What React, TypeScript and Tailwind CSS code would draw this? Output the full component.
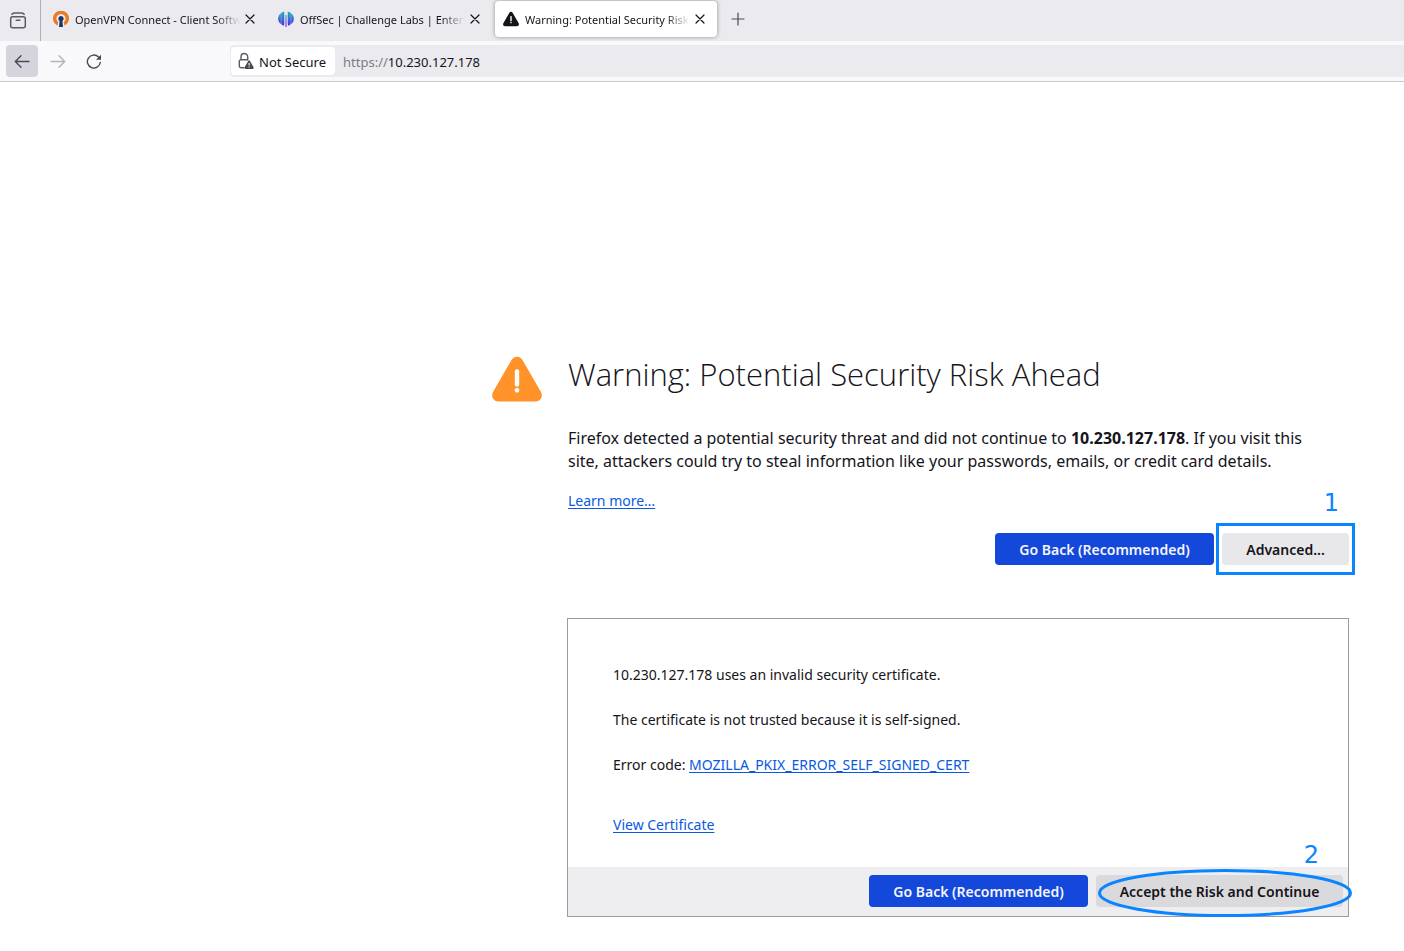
import type { ReactNode } from "react";

function CloseIcon() {
  return (
    <svg width="10" height="10" viewBox="0 0 10 10" fill="none" stroke="#15141a" strokeWidth="1.2" strokeLinecap="round" aria-hidden="true">
      <path d="M1 1l8 8M9 1l-8 8" />
    </svg>
  );
}

function RecentIcon() {
  return (
    <svg width="18" height="18" viewBox="0 0 18 18" fill="none" stroke="#5b5b66" strokeWidth="1.5" strokeLinecap="round" aria-hidden="true">
      <path d="M2.800 2.200C4 1 5 1 6 1H12C13 1 14 1 15.200 2.200" />
      <rect x="1.700" y="4.700" width="14.600" height="11" rx="2" />
      <path d="M7.200 8.300h3.600" />
    </svg>
  );
}

function OpenVpnIcon() {
  return (
    <svg width="16" height="16" viewBox="0 0 16 16" aria-hidden="true">
      <path d="M4.300 14.700A8 8 0 1 1 11.700 14.700L10.700 11.300A4.600 4.600 0 1 0 5.300 11.300Z" fill="#ea7b23" />
      <path d="M8 5a2.700 2.700 0 0 1 1.400 5L10 16H6l.6-6A2.700 2.700 0 0 1 8 5Z" fill="#1b3464" />
    </svg>
  );
}

function OffSecIcon() {
  return (
    <svg width="16" height="16" viewBox="0 0 16 16" aria-hidden="true">
      <defs>
        <linearGradient id="offsec" gradientUnits="userSpaceOnUse" x1="0" y1="0" x2="0" y2="16">
          <stop offset="0" stopColor="#20b2c4" />
          <stop offset="0.5" stopColor="#3a6fd0" />
          <stop offset="1" stopColor="#5a10e0" />
        </linearGradient>
      </defs>
      <g fill="url(#offsec)">
        <path d="M2.900 2.300V13C-.8 10.500-.8 5 2.900 2.300Z" />
        <path d="M3.200 1.800L6.300.6V12.500C6.300 14 5.800 14.800 5 14.500 4 14.200 3.200 13.200 3.200 12Z" />
        <path d="M7.500 4h1v12h-1Z" />
        <path d="M12.800 1.800L9.700.6V12.500C9.700 14 10.200 14.800 11 14.500 12 14.200 12.800 13.200 12.800 12Z" />
        <path d="M13.100 2.300V13C16.800 10.500 16.800 5 13.100 2.300Z" />
      </g>
    </svg>
  );
}

function WarningGlyph({ size, color, mark }: { size: number; color: string; mark: string }) {
  return (
    <svg width={size} height={size} viewBox="0 0 50 50" className="shrink-0" aria-hidden="true">
      <path
        d="M19.500 6C22 1.500 28 1.500 30.500 6L49 38C51.300 42.500 48.500 47.500 43.500 47.500H6.500C1.500 47.500-1.300 42.500 1 38Z"
        fill={color}
      />
      <path d="M25 17.500v13" stroke={mark} strokeWidth="4.400" strokeLinecap="round" />
      <rect x="22.800" y="34" width="4.400" height="4.400" rx="1.600" fill={mark} />
    </svg>
  );
}

function LockWarningIcon() {
  return (
    <svg width="16" height="18" viewBox="0 0 16 18" fill="none" aria-hidden="true">
      <path
        d="M6 15.800H3A1.700 1.700 0 0 1 1.300 14.100V9.400A1.700 1.700 0 0 1 3 7.700H9.500M3 7.700V4.800a3.300 3.300 0 0 1 6.700 0V8"
        stroke="#5b5b66"
        strokeWidth="1.400"
        strokeLinecap="round"
      />
      <path d="M10.200 8.900c.4-.8 1.400-.8 1.800 0l3.600 6.400c.4.700-.1 1.600-.9 1.600H7.500c-.8 0-1.300-.9-.9-1.600Z" fill="#4a4a55" />
      <path d="M11.100 11v2.500M11.100 14.600v.9" stroke="#fff" strokeWidth="1.100" />
    </svg>
  );
}

function Tab({ icon, title, active = false }: { icon: ReactNode; title: string; active?: boolean }) {
  return (
    <div
      className={
        active
          ? "flex h-9 w-[222px] items-center rounded bg-white pr-[7px] pl-2 shadow-[0_0_4px_rgba(0,0,0,0.4)]"
          : "flex h-9 w-[222px] items-center rounded pr-[7px] pl-2"
      }
    >
      {icon}
      <span className="ml-1.5 min-w-0 flex-1 overflow-hidden pt-0.5 text-[11px] leading-4 whitespace-nowrap [mask-image:linear-gradient(to_left,transparent,black_24px)]">
        {title}
      </span>
      <button type="button" aria-label="Close tab" className="flex size-5 items-center justify-center">
        <CloseIcon />
      </button>
    </div>
  );
}

function PrimaryButton() {
  return (
    <button type="button" className="h-8 w-[219px] rounded bg-[#1448da] pt-px text-sm font-semibold text-[#f3f5fd]">
      Go Back (Recommended)
    </button>
  );
}

const link = "text-[#0a5adf] underline underline-offset-2";

export default function App() {
  return (
    <div className="min-h-screen bg-white font-['Noto_Sans','Open_Sans',sans-serif] text-[#15141a]">
      <header>
        <div className="flex h-[41px] bg-[#ebebef]">
          <div className="flex w-[41px] items-center justify-center border-r border-[#aeaeb4] pr-1">
            <button type="button" aria-label="Recent browsing">
              <RecentIcon />
            </button>
          </div>
          <div className="flex items-start gap-[3px] pt-px pl-1">
            <Tab icon={<OpenVpnIcon />} title="OpenVPN Connect - Client Software" />
            <Tab icon={<OffSecIcon />} title="OffSec | Challenge Labs | Enterprise" />
            <Tab icon={<WarningGlyph size={16} color="#15141a" mark="#fff" />} title="Warning: Potential Security Risk Ahead" active />
            <button type="button" aria-label="New tab" className="ml-0.5 flex h-9 w-8 items-center justify-center">
              <svg width="14" height="14" viewBox="0 0 14 14" stroke="#4a4a55" strokeWidth="1.200" strokeLinecap="round" aria-hidden="true">
                <path d="M7 1v12M1 7h12" />
              </svg>
            </button>
          </div>
        </div>
        <div className="flex h-[41px] items-center border-b border-[#c9c9cc] bg-[#f9f9fb]">
          <nav className="flex w-[230px] shrink-0 items-center gap-1 pl-1.5">
            <button type="button" aria-label="Back" className="flex size-8 items-center justify-center rounded bg-[#d5d4dd]">
              <svg width="16" height="14" viewBox="0 0 16 14" fill="none" stroke="#4a4a55" strokeWidth="1.400" strokeLinecap="round" strokeLinejoin="round" aria-hidden="true">
                <path d="M15 7.500H1.500M7 1.800L1.300 7.500 7 13.200" />
              </svg>
            </button>
            <button type="button" aria-label="Forward" className="flex size-8 items-center justify-center">
              <svg width="16" height="14" viewBox="0 0 16 14" fill="none" stroke="#b3b3ba" strokeWidth="1.400" strokeLinecap="round" strokeLinejoin="round" aria-hidden="true">
                <path d="M1 7.500h13.500M9 1.800L14.700 7.500 9 13.200" />
              </svg>
            </button>
            <button type="button" aria-label="Reload" className="flex size-8 items-center justify-center">
              <svg width="16" height="16" viewBox="0 0 16 16" fill="none" aria-hidden="true">
                <path d="M14.300 9.500A6.500 6.500 0 1 1 12.500 4" stroke="#4a4a55" strokeWidth="1.400" strokeLinecap="round" />
                <path d="M15 1.700v4.500a.5.5 0 0 1-.5.5H10Z" fill="#4a4a55" />
              </svg>
            </button>
          </nav>
          <div className="flex h-8 flex-1 items-center rounded-l bg-[#ebebef] pl-px text-[13px]">
            <button type="button" className="flex h-7 w-[104px] items-center gap-[5px] rounded bg-white pl-[7px] whitespace-nowrap">
              <LockWarningIcon />
              <span className="pt-[3px]">Not Secure</span>
            </button>
            <label htmlFor="address" className="pt-[3px] pl-2 text-[#7b7b83]">
              https://
            </label>
            <input id="address" type="text" defaultValue="10.230.127.178" className="min-w-0 flex-1 bg-transparent pt-[3px] outline-none" />
          </div>
        </div>
      </header>

      <main className="flex justify-end pt-[269px] pr-[55px] pb-8 pl-8">
        <div className="flex w-full max-w-[857px] items-start gap-[25px]">
          <div className="pt-[3px]">
            <WarningGlyph size={50} color="#ff9229" mark="#fff" />
          </div>
          <div className="min-w-0 flex-1">
            <h1 className="pl-px font-['Open_Sans',sans-serif] text-[31px] leading-[46px] font-light">Warning: Potential Security Risk Ahead</h1>
            <p className="mt-[30px] pr-6 pl-px text-base leading-[23px]">
              Firefox detected a potential security threat and did not continue to <b>10.230.127.178</b>. If you visit this site, attackers could try to steal
              information like your passwords, emails, or credit card details.
            </p>
            <p className="mt-[17px] pl-px text-sm leading-[22px]">
              <a href="#learn-more" className={link}>
                Learn more…
              </a>
            </p>
            <div className="mt-[21px] flex justify-end gap-2">
              <PrimaryButton />
              <div className="relative">
                <button type="button" className="h-8 w-[127px] rounded bg-[#e8e8ea] pt-px text-sm font-semibold">
                  Advanced...
                </button>
                <div className="pointer-events-none absolute -inset-x-1.5 -inset-y-2.5 border-3 border-[#0a84ff]" />
                <span className="absolute right-2.5 bottom-full mb-3.5 font-['DejaVu_Sans',sans-serif] text-2xl text-[#0a84ff]">1</span>
              </div>
            </div>

            <section className="mt-[53px] border border-[#9b9b9f]">
              <div className="h-[248px] pt-11 pl-[45px] text-sm leading-[23px]">
                <p>10.230.127.178 uses an invalid security certificate.</p>
                <p className="mt-[22px]">The certificate is not trusted because it is self-signed.</p>
                <p className="mt-[22px]">
                  Error code:{" "}
                  <a href="#error-code" className={link}>
                    MOZILLA_PKIX_ERROR_SELF_SIGNED_CERT
                  </a>
                </p>
                <p className="mt-[37px]">
                  <a href="#certificate" className={link}>
                    View Certificate
                  </a>
                </p>
              </div>
              <div className="flex justify-end gap-2 bg-[#eeeef0] pt-2 pr-[5px] pb-[9px]">
                <PrimaryButton />
                <div className="relative">
                  <button type="button" className="h-8 w-[247px] rounded bg-[#dadadc] pt-px text-sm font-semibold">
                    Accept the Risk and Continue
                  </button>
                  <svg className="pointer-events-none absolute -top-2 left-px" width="256" height="50" viewBox="0 0 256 50" fill="none" aria-hidden="true">
                    <ellipse cx="128" cy="26" rx="125.500" ry="22.500" stroke="#0a84ff" strokeWidth="3" />
                  </svg>
                  <span className="absolute right-6 bottom-full mb-1 font-['DejaVu_Sans',sans-serif] text-2xl text-[#0a84ff]">2</span>
                </div>
              </div>
            </section>
          </div>
        </div>
      </main>
    </div>
  );
}
